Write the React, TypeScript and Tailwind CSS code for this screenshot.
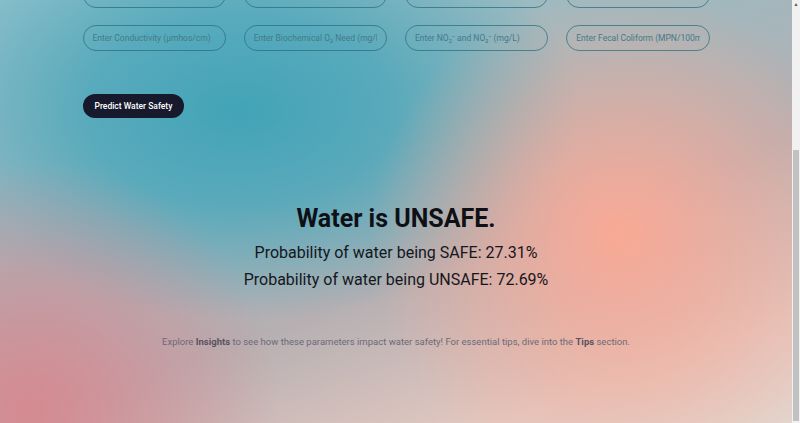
import React from "react";

const topRow = [
  "Enter Temperature (°C)",
  "Enter Dissolved O₂ (mg/L)",
  "Enter pH",
  "Enter Turbidity (NTU)",
];

const bottomRow = [
  "Enter Conductivity (µmhos/cm)",
  "Enter Biochemical O₂ Need (mg/L)",
  "Enter NO₃⁻ and NO₂⁻ (mg/L)",
  "Enter Fecal Coliform (MPN/100ml)",
];

function Field({ placeholder }: { placeholder: string }) {
  return (
    <input
      type="text"
      placeholder={placeholder}
      className="h-[26px] w-full min-w-0 rounded-full border border-[#2b6f80]/75 bg-transparent px-[9px] text-[8.5px] text-[#1e3a44] outline-none placeholder:text-[#457a88]"
    />
  );
}

export default function App() {
  return (
    <div className="flex h-screen w-full overflow-hidden font-['Roboto',sans-serif]">
      <main className="flex-1 overflow-hidden bg-[radial-gradient(circle_at_620px_235px,#f8aa95_0px,rgba(246,170,152,0.85)_55px,rgba(240,175,160,0)_250px),radial-gradient(circle_at_30px_410px,#d58a91_0px,rgba(212,140,147,0.75)_80px,rgba(190,140,150,0)_250px),radial-gradient(ellipse_340px_210px_at_240px_110px,#42a3b7_0%,rgba(72,166,186,0.8)_45%,rgba(90,165,185,0)_100%),linear-gradient(160deg,#93c2cc_0%,#9fb8be_35%,#b5afb2_60%,#e3c8c0_85%,#e3d4cc_100%)]">
        <div className="mx-auto w-[627px]">
          <div className="-mt-[18px] grid grid-cols-4 gap-x-[18px] gap-y-[17px]">
            {topRow.map((p) => (
              <Field key={p} placeholder={p} />
            ))}
            {bottomRow.map((p) => (
              <Field key={p} placeholder={p} />
            ))}
          </div>

          <button className="mt-[43px] h-[24px] rounded-full bg-[#161a2c] px-[12px] text-[8.5px] font-medium text-white">
            Predict Water Safety
          </button>

          <div className="mt-[87px] flex flex-col items-center text-[#0e1016]">
            <h2 className="text-[25px] font-bold leading-[28px]">
              Water is UNSAFE.
            </h2>
            <p className="mt-[6px] text-[16px] leading-[27px] text-[#15171d]">
              Probability of water being SAFE: 27.31%
            </p>
            <p className="text-[16px] leading-[27px] text-[#15171d]">
              Probability of water being UNSAFE: 72.69%
            </p>
            <p className="mt-[42px] text-[9.5px] text-[#6c6a76]">
              Explore <span className="font-bold text-[#56535f]">Insights</span>{" "}
              to see how these parameters impact water safety! For essential
              tips, dive into the{" "}
              <span className="font-bold text-[#56535f]">Tips</span> section.
            </p>
          </div>
        </div>
      </main>

      {/* browser scrollbar */}
      <div className="flex w-[8px] flex-col bg-[#f1f1f1]">
        <div className="flex h-[9px] items-center justify-center text-[5px] leading-none text-[#555]">
          ▲
        </div>
        <div className="h-[141px]" />
        <div className="mx-[1px] flex-1 bg-[#c1c1c1]" />
        <div className="h-[2px]" />
      </div>
    </div>
  );
}
